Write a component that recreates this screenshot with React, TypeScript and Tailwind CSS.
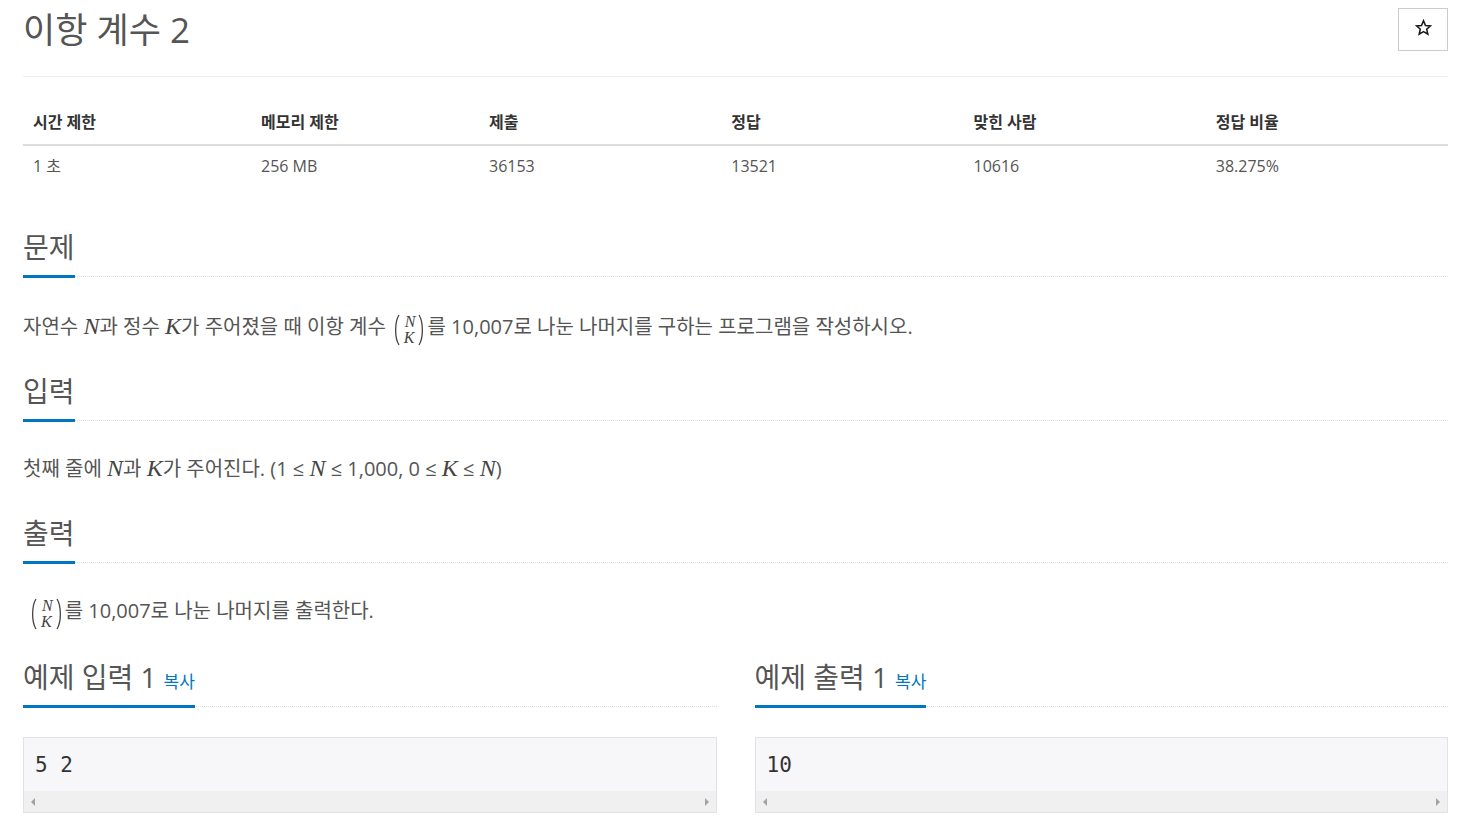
const font = "font-['Open_Sans','Noto_Sans_CJK_KR',sans-serif]";

function Paren({ right }: { right?: boolean }) {
  return (
    <svg width="7" height="32" viewBox="0 0 7 32" className={right ? "-scale-x-100" : ""}>
      <path d="M6 1 C1.5 8 1.5 24 6 31" stroke="#444" strokeWidth="1.3" fill="none" />
    </svg>
  );
}

function Binom() {
  return (
    <span className="inline-flex items-center align-middle -my-[10px] relative top-[1px] ml-[7px] mr-[2px] font-['Liberation_Serif',serif] italic text-[#444]">
      <Paren />
      <span className="inline-flex flex-col items-center text-[16px] leading-[16px] mx-[3px]">
        <span className="pl-[2px]">N</span>
        <span>K</span>
      </span>
      <Paren right />
    </span>
  );
}

function M({ children }: { children: string }) {
  return <span className="font-['Liberation_Serif',serif] italic text-[24px] leading-[20px] text-[#444]">{children}</span>;
}

function Star() {
  return (
    <svg width="17" height="17" viewBox="0 0 24 24">
      <path
        d="M12 2.5l2.8 6.6 7.1.6-5.4 4.7 1.6 7-6.1-3.7-6.1 3.7 1.6-7-5.4-4.7 7.1-.6z"
        fill="none"
        stroke="#1a1a1a"
        strokeWidth="2.2"
        strokeLinejoin="miter"
      />
    </svg>
  );
}

function Headline({ title, copy, className = "" }: { title: string; copy?: boolean; className?: string }) {
  return (
    <div className={`flex border-b border-dotted border-[#dcdcdc] ${className}`}>
      <h2 className="flex items-baseline h-[48px] text-[28px] leading-[34px] pb-[11px] -mb-[2px] border-b-[3px] border-[#0076c0] text-[#555] font-normal whitespace-nowrap">
        {title}
        {copy && <span className="text-[17px] leading-[20px] text-[#0076c0] ml-[7px]">복사</span>}
      </h2>
    </div>
  );
}

function Sample({ title, value }: { title: string; value: string }) {
  return (
    <div className="flex flex-col">
      <Headline title={title} copy />
      <div className="mt-[30px] border border-[#e1e1e8] bg-[#f7f7f9] h-[76px] flex flex-col">
        <pre className="flex-1 px-[11px] pt-[13px] text-[21px] leading-[28px] text-[#333] font-['DejaVu_Sans_Mono',monospace] whitespace-pre">
          {value}
        </pre>
        <div className="h-[21px] bg-[#f0f0f0] flex items-center justify-between px-[7px]">
          <span className="w-0 h-0 border-y-[4px] border-y-transparent border-r-[4px] border-r-[#a3a3a3]" />
          <span className="w-0 h-0 border-y-[4px] border-y-transparent border-l-[4px] border-l-[#a3a3a3]" />
        </div>
      </div>
    </div>
  );
}

const stats = [
  ["시간 제한", "1 초", "w-[16%]"],
  ["메모리 제한", "256 MB", "w-[16%]"],
  ["제출", "36153", "w-[17%]"],
  ["정답", "13521", "w-[17%]"],
  ["맞힌 사람", "10616", "w-[17%]"],
  ["정답 비율", "38.275%", "w-[17%]"],
];

const para = "text-[20px] leading-[30px] h-[30px] text-[#555] whitespace-nowrap";

export default function App() {
  return (
    <div className={`${font} bg-white text-[#555] w-[1481px] h-[828px] overflow-hidden`}>
      <div className="mx-[23px] w-[1425px]">
        <div className="flex items-start justify-between pt-[10px] pb-[25px] border-b border-[#eee]">
          <h1 className="text-[35px] leading-[40px] font-normal text-[#555]">이항 계수 2</h1>
          <button className="w-[50px] h-[43px] -mt-[2px] border border-[#ccc] bg-white flex items-center justify-center pb-[4px]">
            <Star />
          </button>
        </div>

        <table className="w-full mt-[26px] text-[16px] text-[#333] table-fixed">
          <thead>
            <tr className="border-b-2 border-[#ddd]">
              {stats.map(([h, , w]) => (
                <th key={h} className={`${w} text-left font-bold px-[10px] pt-[8px] pb-[11px] leading-[22px]`}>
                  {h}
                </th>
              ))}
            </tr>
          </thead>
          <tbody>
            <tr>
              {stats.map(([h, v]) => (
                <td key={h} className="px-[10px] pt-[9px] pb-[9px] leading-[22px] text-[#555]">
                  {v}
                </td>
              ))}
            </tr>
          </tbody>
        </table>

        <Headline title="문제" className="mt-[44px]" />
        <p className={`mt-[35px] ${para}`}>
          자연수 <M>N</M>과 정수 <M>K</M>가 주어졌을 때 이항 계수<Binom />를 10,007로 나눈 나머지를 구하는 프로그램을 작성하시오.
        </p>

        <Headline title="입력" className="mt-[32px]" />
        <p className={`mt-[33px] ${para}`}>
          첫째 줄에 <M>N</M>과 <M>K</M>가 주어진다. (1 ≤ <M>N</M> ≤ 1,000, 0 ≤ <M>K</M> ≤ <M>N</M>)
        </p>

        <Headline title="출력" className="mt-[32px]" />
        <p className={`mt-[33px] ${para}`}>
          <Binom />를 10,007로 나눈 나머지를 출력한다.
        </p>

        <div className="grid grid-cols-2 gap-[38px] mt-[34px]">
          <Sample title="예제 입력 1" value="5 2" />
          <Sample title="예제 출력 1" value="10" />
        </div>
      </div>
    </div>
  );
}
